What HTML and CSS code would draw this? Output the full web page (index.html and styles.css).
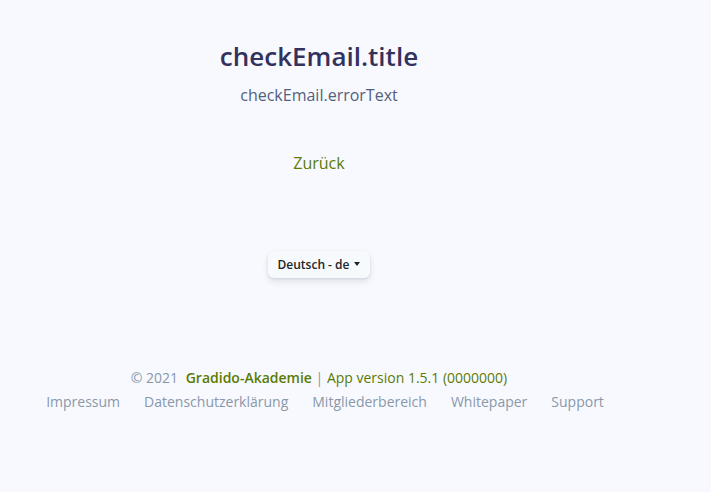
FILE: index.html
```html
<!DOCTYPE html>
<html lang="de">
<head>
<meta charset="utf-8">
<link rel="stylesheet" href="styles.css">
</head>
<body>
<div class="page">
  <div class="col">
    <section class="header">
      <h1 class="title">checkEmail.title</h1>
      <p class="lead">checkEmail.errorText</p>
    </section>
    <div class="back"><a href="#">Zurück</a></div>
    <div class="lang">
      <button class="lang-btn">Deutsch - de<span class="caret"></span></button>
    </div>
    <footer class="footer">
      <div class="copy">© 2021 <a class="brand" href="#">Gradido-Akademie</a> | <span class="version">App version 1.5.1 (0000000)</span></div>
      <nav class="links">
        <a href="#">Impressum</a>
        <a href="#">Datenschutzerklärung</a>
        <a href="#">Mitgliederbereich</a>
        <a href="#">Whitepaper</a>
        <a href="#">Support</a>
      </nav>
    </footer>
  </div>
</div>
</body>
</html>
```

FILE: styles.css
```css
html, body {
  margin: 0;
  padding: 0;
  background: #f8f9fe;
  font-family: "Open Sans", sans-serif;
}
.page {
  width: 711px;
  height: 492px;
}
.col {
  width: 638px;
  display: flex;
  flex-direction: column;
  align-items: center;
}
.header {
  text-align: center;
  padding-top: 37px;
}
.title {
  margin: 0;
  font-size: 26px;
  font-weight: 600;
  line-height: 38px;
  color: #32325d;
}
.lead {
  margin: 8px 0 0;
  font-size: 16px;
  line-height: 24px;
  color: #525f7f;
}
.back {
  margin-top: 44px;
  font-size: 16px;
  line-height: 24px;
}
.back a {
  color: #5a7b02;
  text-decoration: none;
}
.lang {
  margin-top: 76px;
}
.lang-btn {
  font-family: "Open Sans", sans-serif;
  font-size: 12px;
  font-weight: 600;
  color: #212529;
  background: #f7fafc;
  border: none;
  border-radius: 6px;
  padding: 5px 10px 5px 10px;
  height: 27px;
  box-shadow: 0 4px 6px rgba(50, 50, 93, 0.11), 0 1px 3px rgba(0, 0, 0, 0.08);
  display: flex;
  align-items: center;
}
.caret {
  display: inline-block;
  margin-left: 5px;
  width: 0;
  height: 0;
  border-left: 3.5px solid transparent;
  border-right: 3.5px solid transparent;
  border-top: 4px solid #212529;
  position: relative;
  top: -1px;
}
.footer {
  margin-top: 89px;
  display: flex;
  flex-direction: column;
  align-items: center;
  font-size: 14px;
  line-height: 21px;
}
.copy {
  color: #8898aa;
}
.brand {
  color: #5a7b02;
  font-weight: 600;
  text-decoration: none;
  margin-left: 4px;
}
.version {
  color: #5a7b02;
}
.links {
  margin-top: 3px;
  display: flex;
  gap: 24px;
  padding-left: 12px;
}
.links a {
  color: #8898aa;
  text-decoration: none;
}
```
